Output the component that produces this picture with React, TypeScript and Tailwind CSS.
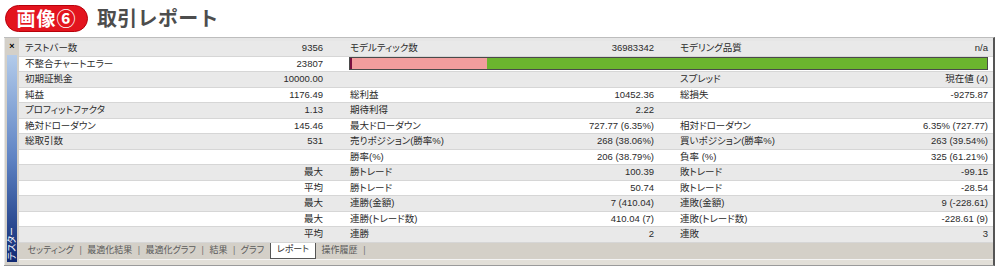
import type { ReactNode } from "react";

type Cell = [string, string];

const rows: (Cell[] | "bar")[] = [
    [["テストバー数", "9356"], ["モデルティック数", "36983342"], ["モデリング品質", "n/a"]],
    "bar",
    [["初期証拠金", "10000.00"], ["", ""], ["スプレッド", "現在値 (4)"]],
    [["純益", "1176.49"], ["総利益", "10452.36"], ["総損失", "-9275.87"]],
    [["プロフィットファクタ", "1.13"], ["期待利得", "2.22"], ["", ""]],
    [["絶対ドローダウン", "145.46"], ["最大ドローダウン", "727.77 (6.35%)"], ["相対ドローダウン", "6.35% (727.77)"]],
    [["総取引数", "531"], ["売りポジション(勝率%)", "268 (38.06%)"], ["買いポジション(勝率%)", "263 (39.54%)"]],
    [["", ""], ["勝率(%)", "206 (38.79%)"], ["負率 (%)", "325 (61.21%)"]],
    [["", "最大"], ["勝トレード", "100.39"], ["敗トレード", "-99.15"]],
    [["", "平均"], ["勝トレード", "50.74"], ["敗トレード", "-28.54"]],
    [["", "最大"], ["連勝(金額)", "7 (410.04)"], ["連敗(金額)", "9 (-228.61)"]],
    [["", "最大"], ["連勝(トレード数)", "410.04 (7)"], ["連敗(トレード数)", "-228.61 (9)"]],
    [["", "平均"], ["連勝", "2"], ["連敗", "3"]],
];

const tabs = ["セッティング", "最適化結果", "最適化グラフ", "結果", "グラフ", "レポート", "操作履歴"];

const colClass = ["w-[327px] pl-[6px] pr-[23px]", "w-[330px] pl-[4px] pr-[22px]", "flex-1 pl-[4px] pr-[5px]"];

const Pair = ({ cell, i }: { cell: Cell; i: number }) => (
    <div className={`flex h-full items-center justify-between ${colClass[i]}`}>
        <span>{cell[0]}</span>
        <span>{cell[1]}</span>
    </div>
);

const Row = ({ odd, children }: { odd: boolean; children: ReactNode }) => (
    <div className={`flex h-[15.5px] border-b border-[#d6d6d6] ${odd ? "bg-[#e9e9e9]" : "bg-white"}`}>{children}</div>
);

const App = () => {
    return (
        <div className="w-[1000px] h-[271px] bg-white overflow-hidden font-['Liberation_Sans','Noto_Sans_CJK_JP',sans-serif]">
            {/* title */}
            <div className="flex items-center h-[37px] pl-[5px] pb-[1px] gap-[9px]">
                <div className="flex items-center h-[27px] w-[83px] justify-center rounded-full bg-[#e3141e] border border-[#b8000a] text-white font-bold text-[19px] tracking-[1px] font-['Noto_Sans_CJK_JP',sans-serif]">
                    画像⑥
                </div>
                <div className="text-[20px] font-bold text-[#4d4d4d] tracking-[0.3px] font-['Noto_Sans_CJK_JP',sans-serif]">取引レポート</div>
            </div>

            {/* tester panel */}
            <div className="ml-[4px] w-[991px] h-[229px] flex border-t border-[#bdbdbd] border-r-2 border-r-[#555] border-b border-b-[#9a9a9a] bg-[#d4d0c8] text-[9.5px] text-[#2b2b2b] [font-feature-settings:'palt']">
                <div className="w-[15px] flex flex-col items-center pt-[3px] pb-[3px] border-l border-[#e8e8e8]">
                    <div className="text-[9px] leading-[10px] font-bold text-black">×</div>
                    <div className="mt-[4px] w-[10px] flex-1 flex items-end justify-center bg-gradient-to-b from-[#b3cbea] via-[#5f83c3] to-[#112a74] pb-[2px]">
                        <span className="[writing-mode:vertical-rl] [text-orientation:sideways] rotate-180 text-white text-[9px] leading-[10px] font-['Noto_Sans_CJK_JP',sans-serif]">
                            テスター
                        </span>
                    </div>
                </div>
                <div className="flex-1 flex flex-col">
                    <div className="h-[3px] bg-[#e6e6e6]"></div>
                    {rows.map((r, ri) => (
                        <Row key={ri} odd={ri % 2 === 0}>
                            {r === "bar" ? (
                                <>
                                    <Pair cell={["不整合チャートエラー", "23807"]} i={0} />
                                    <div className="flex-1 flex items-center pl-[3px] pr-[5px]">
                                        <div className="flex w-full h-[13px] border border-[#4a4a4a]">
                                            <div className="w-[137px] bg-[#f29d9d] border-l-2 border-[#7a1040]"></div>
                                            <div className="flex-1 bg-[#6bb52e]"></div>
                                        </div>
                                    </div>
                                </>
                            ) : (
                                r.map((c, ci) => <Pair key={ci} cell={c} i={ci} />)
                            )}
                        </Row>
                    ))}
                    {/* tabs */}
                    <div className="flex items-stretch h-[16px] pl-[3px] text-[9px] text-[#5a5a5a] bg-[#d4d0c8]">
                        {tabs.map((t, ti) =>
                            t === "レポート" ? (
                                <div key={t} className="flex items-center px-[6px] bg-white border-x border-b border-[#555] text-[#333]">
                                    {t}
                                </div>
                            ) : (
                                <div key={t} className="flex items-center">
                                    <span className="px-[5.5px]">{t}</span>
                                    {tabs[ti + 1] !== "レポート" && <span className="text-[#777]">|</span>}
                                </div>
                            )
                        )}
                    </div>
                    <div className="flex-1 border-t border-[#f4f4f4] bg-[#e2dfd8]"></div>
                </div>
            </div>
        </div>
    );
};

export default App;
